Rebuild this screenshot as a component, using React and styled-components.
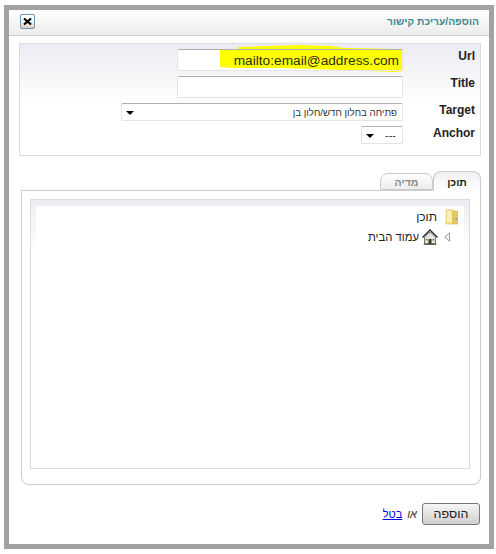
import React from 'react'
import styled, { createGlobalStyle } from 'styled-components'

const Global = createGlobalStyle`
  html, body { margin: 0; padding: 0; background: #fff; }
  body { font-family: "Liberation Sans", Arial, sans-serif; font-size: 12px; color: #222; }
`
const Page = styled.div`
  width: 496px;
  height: 554px;
  padding: 5px 2px 5px 4px;
  box-sizing: border-box;
`
const Frame = styled.div`
  height: 544px;
  box-sizing: border-box;
  border: 5px solid #a2a2a2;
  background: #fff;
  display: flex;
  flex-direction: column;
`
const Header = styled.div`
  height: 26px;
  box-sizing: border-box;
  flex: none;
  display: flex;
  align-items: center;
  justify-content: space-between;
  padding: 0 10px 2px 11px;
  background: linear-gradient(#fff, #ececec);
  border-bottom: 1px solid #ccc;
`
const Heading = styled.div`
  font-size: 10.3px;
  font-weight: bold;
  color: #3f8a90;
`
const CloseButton = styled.button`
  width: 15px;
  height: 15px;
  margin: 0;
  padding: 0;
  display: flex;
  align-items: center;
  justify-content: center;
  border: 1px solid #6f93ad;
  border-radius: 2px;
  background: linear-gradient(#fff 40%, #d9cfbf);
`
const FormPanel = styled.div`
  margin: 7px 8px 0 10px;
  padding: 5px 0 11px;
  display: flex;
  flex-direction: column;
  gap: 5px;
  border: 1px solid #dcdcdc;
  background: linear-gradient(#ebebf2, #fff 58px);
`
const FormRow = styled.div`
  display: flex;
  align-items: flex-start;
`
const Label = styled.label`
  width: 77px;
  box-sizing: border-box;
  padding-right: 5px;
  flex: none;
  font-size: 12px;
  line-height: 14px;
  font-weight: bold;
  color: #222;
  direction: ltr;
  text-align: right;
`
const Field = styled.div`
  position: relative;
  width: 226px;
  height: 22px;
  background: #fff;
`
const TextInput = styled.input`
  position: relative;
  z-index: 2;
  display: block;
  width: 100%;
  height: 100%;
  box-sizing: border-box;
  margin: 0;
  padding: 0 3px 0 0;
  border: 1px solid #e2e2e8;
  border-top-color: #aeaeb4;
  border-radius: 2px;
  background: transparent;
  font: 13.7px "Liberation Sans", Arial, sans-serif;
  color: #2c2c10;
  direction: ltr;
  text-align: right;
  outline: none;
`
const Highlight = styled.svg`
  position: absolute;
  left: 0;
  top: 0;
  z-index: 1;
  overflow: visible;
`
const SelectBox = styled.div`
  width: ${p => p.$width}px;
  height: 18px;
  box-sizing: border-box;
  display: flex;
  align-items: center;
  justify-content: space-between;
  padding: 0 5px 0 4px;
  border: 1px solid #e2e2e8;
  border-top-color: #aeaeb4;
  border-radius: 2px;
  background: #fff;
  font-size: 9.7px;
  color: #333;
`
const Dashes = styled.span`
  font-size: 11px;
  margin-right: 1px;
`
const Caret = styled.span`
  width: 0;
  height: 0;
  margin-top: 2px;
  border-left: 4px solid transparent;
  border-right: 4px solid transparent;
  border-top: 4px solid #000;
`
const Tabs = styled.div`
  margin: 15px 8px 0 12px;
  height: 19px;
  flex: none;
  display: flex;
  align-items: flex-end;
`
const Tab = styled.div`
  position: relative;
  z-index: 1;
  box-sizing: border-box;
  width: ${p => (p.$active ? 48 : 53)}px;
  height: ${p => (p.$active ? 20 : 17)}px;
  margin-bottom: ${p => (p.$active ? -1 : 0)}px;
  display: flex;
  align-items: center;
  justify-content: center;
  border: 1px solid #ccc;
  border-bottom: ${p => (p.$active ? 'none' : '1px solid #ccc')};
  border-radius: 8px 8px 0 0;
  background: ${p => (p.$active ? 'linear-gradient(#f0f0f4, #fff)' : 'linear-gradient(#fff, #ececec)')};
  font-size: 10.5px;
  font-weight: bold;
  color: ${p => (p.$active ? '#222' : '#8a8a8a')};
`
const ContentPanel = styled.div`
  margin: 0 8px 0 12px;
  padding: 8px 10px 15px 8px;
  border: 1px solid #ccc;
  border-radius: 0 0 8px 8px;
`
const TreeBox = styled.div`
  height: 270px;
  box-sizing: border-box;
  padding: 6px 5px 0;
  border: 1px solid #dcdcdc;
  background: linear-gradient(#ebebf3, #fff 48px);
`
const TreeBody = styled.div`
  height: 100%;
  box-sizing: border-box;
  padding: 2px 6px 0 0;
  display: flex;
  flex-direction: column;
  gap: 3px;
  background: #fff;
`
const TreeRow = styled.div`
  height: 17px;
  display: flex;
  align-items: center;
  gap: ${p => p.$gap}px;
  padding-right: ${p => p.$indent || 0}px;
  font-size: ${p => p.$size || 12}px;
  color: #222;
`
const ArrowIcon = styled.svg`
  flex: none;
  margin-left: 3px;
`
const Footer = styled.div`
  margin: 18px 9px 0 0;
  display: flex;
  align-items: center;
  gap: 5px;
  font-size: 11px;
`
const SubmitButton = styled.button`
  width: 58px;
  height: 22px;
  margin: 0;
  padding: 0;
  border: 1px solid #777;
  border-radius: 3px;
  background: linear-gradient(#f6f6f6, #cfcfcf);
  font: 12.5px "Liberation Sans", Arial, sans-serif;
  color: #222;
`
const Or = styled.i`
  color: #333;
`
const CancelLink = styled.a`
  color: #0000ee;
  text-decoration: underline;
`

function CloseIcon() {
  return (
    <svg width="9" height="9" viewBox="0 0 9 9">
      <path d="M1 1.5 L8 7.5 M8 1.5 L1 7.5" stroke="#000" strokeWidth="2.2" fill="none" />
    </svg>
  )
}

function FolderIcon() {
  return (
    <svg width="13" height="16" viewBox="0 0 13 16" style={{ flex: 'none' }}>
      <path d="M1 1 L8 0.5 L8 15 L1 15 Z" fill="#f5e08c" stroke="#dcc25e" strokeWidth="0.6" />
      <path d="M8 2 L12.5 2 L12.5 15 L8 15 Z" fill="#e8c95c" stroke="#c9a84c" strokeWidth="0.6" />
      <path d="M2.2 2 L6.5 2 L6.5 13 L2.2 13 Z" fill="#fbefb8" />
      <path d="M10.5 9 L12 9 L12 11 L10.5 11 Z" fill="#7f9fb8" />
    </svg>
  )
}

function HomeIcon() {
  return (
    <svg width="16" height="16" viewBox="0 0 16 16" style={{ flex: 'none' }}>
      <path d="M2.5 8 L2.5 15 L13.5 15 L13.5 8 L8 3 Z" fill="#e4e4da" stroke="#555" strokeWidth="0.8" />
      <path d="M0.5 8.5 L8 1 L15.5 8.5" fill="none" stroke="#2c2c2c" strokeWidth="1.4" />
      <path d="M6.5 10 L9.5 10 L9.5 15 L6.5 15 Z" fill="#33402c" />
      <path d="M3 14.5 L13 14.5 L15 15.8 L1 15.8 Z" fill="#3e4f34" />
      <path d="M3.8 10 L5.4 10 L5.4 11.6 L3.8 11.6 Z M10.6 10 L12.2 10 L12.2 11.6 L10.6 11.6 Z" fill="#6a6a5c" />
    </svg>
  )
}

function ExpandArrow() {
  return (
    <ArrowIcon width="6" height="10" viewBox="0 0 6 10">
      <path d="M5.5 0.8 L5.5 9.2 L0.8 5 Z" fill="#fff" stroke="#9a9a9a" strokeWidth="1" />
    </ArrowIcon>
  )
}

export default function App() {
  return (
    <Page dir="rtl">
      <Global />
      <Frame>
        <Header>
          <Heading>הוספה/עריכת קישור</Heading>
          <CloseButton aria-label="close"><CloseIcon /></CloseButton>
        </Header>

        <FormPanel>
          <FormRow>
            <Label>Url</Label>
            <Field>
              <Highlight width="226" height="22" viewBox="0 0 226 22">
                <polygon
                  points="43,1 61,1 61,-2 123,-4 153,-3 168,-1 223,0 225,0 226,22 218,23 163,21 103,19 58,19 43,18"
                  fill="#ffff00"
                />
              </Highlight>
              <TextInput readOnly value="mailto:email@address.com" />
            </Field>
          </FormRow>
          <FormRow>
            <Label>Title</Label>
            <Field><TextInput readOnly value="" /></Field>
          </FormRow>
          <FormRow>
            <Label>Target</Label>
            <SelectBox $width={282}>
              <span>פתיחה בחלון חדש/חלון בן</span>
              <Caret />
            </SelectBox>
          </FormRow>
          <FormRow>
            <Label>Anchor</Label>
            <SelectBox $width={42}>
              <Dashes>---</Dashes>
              <Caret />
            </SelectBox>
          </FormRow>
        </FormPanel>

        <Tabs>
          <Tab $active>תוכן</Tab>
          <Tab>מדיה</Tab>
        </Tabs>
        <ContentPanel>
          <TreeBox>
            <TreeBody>
              <TreeRow $gap={8}>
                <FolderIcon />
                <span>תוכן</span>
              </TreeRow>
              <TreeRow $gap={3} $indent={8} $size={11.3}>
                <ExpandArrow />
                <HomeIcon />
                <span>עמוד הבית</span>
              </TreeRow>
            </TreeBody>
          </TreeBox>
        </ContentPanel>

        <Footer>
          <SubmitButton>הוספה</SubmitButton>
          <Or>או</Or>
          <CancelLink href="#">בטל</CancelLink>
        </Footer>
      </Frame>
    </Page>
  )
}
